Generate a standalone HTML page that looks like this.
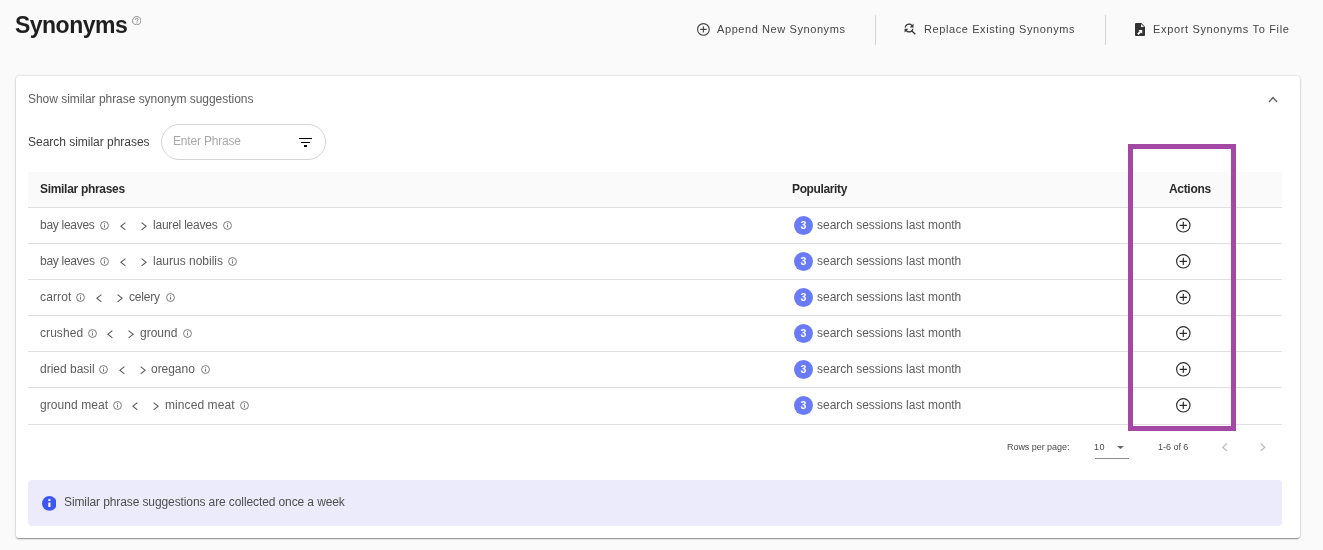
<!DOCTYPE html>
<html><head><meta charset="utf-8"><style>
html,body{margin:0;padding:0;}
body{width:1323px;height:550px;overflow:hidden;background:#fafafa;position:relative;font-family:"Liberation Sans", sans-serif;}
.t{position:absolute;white-space:nowrap;will-change:transform;}
.a{position:absolute;display:block;}
.card{position:absolute;left:16px;top:76px;width:1284px;height:462px;background:#fff;border-radius:3px;box-shadow:0px 2px 1px -1px rgba(0,0,0,0.2),0px 1px 1px 0px rgba(0,0,0,0.14),0px 1px 3px 0px rgba(0,0,0,0.12),0 0 2px rgba(0,0,0,0.2);}
.vdiv{position:absolute;top:15px;width:1px;height:29.5px;background:#d6d6d6;}
.pill{position:absolute;left:161px;top:124px;width:162.5px;height:33.5px;border:1px solid #d4d4d4;border-radius:18px;box-sizing:content-box;}
.bar{position:absolute;height:1.4px;background:#000;}
.thead{position:absolute;left:28px;top:172px;width:1254px;height:35px;background:#fafafa;}
.hline{position:absolute;left:28px;width:1254px;height:1px;background:#e0e0e0;}
.badge{position:absolute;left:794px;width:19px;height:19px;border-radius:50%;background:#6a7bf6;color:#fff;font-size:10.5px;font-weight:700;line-height:19px;text-align:center;will-change:transform;}
.alert{position:absolute;left:28px;top:480px;width:1254px;height:46px;background:#ebebfb;border-radius:4px;}
.purple{position:absolute;left:1128px;top:144px;width:98px;height:276.5px;border:5px solid #a349a4;}
</style></head><body>
<div class="card"></div>
<div class="vdiv" style="left:875px"></div><div class="vdiv" style="left:1105px"></div>
<svg class="a" style="left:131.7px;top:16px" width="9.4" height="9.4" viewBox="0 0 20 20"><circle cx="10" cy="10" r="8.9" fill="none" stroke="#7c7c7c" stroke-width="1.8"/><path d="M7 7.8 C7 6 8.4 4.9 10 4.9 C11.7 4.9 13 6 13 7.5 C13 9.5 10.3 9.6 10.3 12.2" fill="none" stroke="#7c7c7c" stroke-width="1.9"/><circle cx="10.3" cy="15" r="1.1" fill="#7c7c7c"/></svg>
<svg class="a" style="left:696.90px;top:22.90px" width="12.8" height="12.8"><circle cx="6.4" cy="6.4" r="5.825" fill="none" stroke="#4a4a4a" stroke-width="1.15"/><path d="M3.2 6.4 H9.600000000000001 M6.4 3.2 V9.600000000000001" stroke="#4a4a4a" stroke-width="1.15"/></svg>
<svg class="a" style="left:902.2px;top:21.4px" width="15.4" height="15.4" viewBox="0 0 24 24"><path fill="#383838" d="M11 6c1.38 0 2.63.56 3.54 1.46L12 10h6V4l-2.05 2.05C14.68 4.78 12.93 4 11 4c-3.53 0-6.43 2.61-6.92 6H6.1c.46-2.28 2.48-4 4.9-4zm5.64 9.14c.66-.9 1.12-1.97 1.28-3.14H15.9c-.46 2.28-2.48 4-4.9 4-1.38 0-2.63-.56-3.54-1.46L10 12H4v6l2.05-2.05C7.32 17.22 9.07 18 11 18c1.55 0 2.98-.51 4.14-1.36L20 21.49 21.49 20l-4.85-4.86z"/></svg>
<svg class="a" style="left:1134.6px;top:23px" width="10" height="13" viewBox="0 0 10 13"><path fill="#333" d="M1 0 H6.3 L10 3.7 V12 Q10 13 9 13 H1 Q0 13 0 12 V1 Q0 0 1 0 Z"/><path fill="#fff" d="M6 0.9 L9.1 4 H6 Z"/><path fill="#fff" d="M2.2 10.6 L4.6 8.2 L3.4 7 H7.2 V10.8 L6 9.6 L3.6 12 Z"/></svg>
<svg class="a" style="left:1268px;top:96px" width="10" height="7"><path d="M1 6 L5 1.6 L9 6" fill="none" stroke="#616161" stroke-width="1.4"/></svg>
<div class="pill"></div>
<div class="bar" style="left:298.7px;top:137.8px;width:13.3px"></div><div class="bar" style="left:300.9px;top:141.7px;width:9px"></div><div class="bar" style="left:303.9px;top:145.2px;width:3px;height:1.8px"></div>
<div class="thead"></div>
<div class="hline" style="top:207.0px"></div>
<div class="hline" style="top:243.0px"></div>
<div class="hline" style="top:279.0px"></div>
<div class="hline" style="top:315.0px"></div>
<div class="hline" style="top:351.0px"></div>
<div class="hline" style="top:387.0px"></div>
<div class="hline" style="top:423.5px"></div>
<svg class="a" style="left:99.90px;top:220.80px" width="9" height="9" viewBox="0 0 18 18"><circle cx="9" cy="9" r="7.9" fill="none" stroke="#666" stroke-width="1.7"/><rect x="8.1" y="7.6" width="1.8" height="5.6" fill="#666"/><rect x="8.1" y="4.6" width="1.8" height="1.8" fill="#666"/></svg>
<svg class="a" style="left:120.00px;top:222.35px" width="6" height="8.5"><path d="M5.4 0.6 L0.8 4.25 L5.4 7.9" fill="none" stroke="#5a5a5a" stroke-width="1.1"/></svg>
<svg class="a" style="left:140.80px;top:222.35px" width="6" height="8.5"><path d="M0.6 0.6 L5.2 4.25 L0.6 7.9" fill="none" stroke="#5a5a5a" stroke-width="1.1"/></svg>
<svg class="a" style="left:223.00px;top:220.80px" width="9" height="9" viewBox="0 0 18 18"><circle cx="9" cy="9" r="7.9" fill="none" stroke="#666" stroke-width="1.7"/><rect x="8.1" y="7.6" width="1.8" height="5.6" fill="#666"/><rect x="8.1" y="4.6" width="1.8" height="1.8" fill="#666"/></svg>
<div class="badge" style="top:215.80px">3</div>
<svg class="a" style="left:1176.40px;top:218.00px" width="14.6" height="14.6"><circle cx="7.3" cy="7.3" r="6.725" fill="none" stroke="#2a2a2a" stroke-width="1.15"/><path d="M3.65 7.3 H10.95 M7.3 3.65 V10.95" stroke="#2a2a2a" stroke-width="1.15"/></svg>
<svg class="a" style="left:99.80px;top:256.80px" width="9" height="9" viewBox="0 0 18 18"><circle cx="9" cy="9" r="7.9" fill="none" stroke="#666" stroke-width="1.7"/><rect x="8.1" y="7.6" width="1.8" height="5.6" fill="#666"/><rect x="8.1" y="4.6" width="1.8" height="1.8" fill="#666"/></svg>
<svg class="a" style="left:119.80px;top:258.35px" width="6" height="8.5"><path d="M5.4 0.6 L0.8 4.25 L5.4 7.9" fill="none" stroke="#5a5a5a" stroke-width="1.1"/></svg>
<svg class="a" style="left:140.60px;top:258.35px" width="6" height="8.5"><path d="M0.6 0.6 L5.2 4.25 L0.6 7.9" fill="none" stroke="#5a5a5a" stroke-width="1.1"/></svg>
<svg class="a" style="left:227.90px;top:256.80px" width="9" height="9" viewBox="0 0 18 18"><circle cx="9" cy="9" r="7.9" fill="none" stroke="#666" stroke-width="1.7"/><rect x="8.1" y="7.6" width="1.8" height="5.6" fill="#666"/><rect x="8.1" y="4.6" width="1.8" height="1.8" fill="#666"/></svg>
<div class="badge" style="top:251.80px">3</div>
<svg class="a" style="left:1176.40px;top:254.00px" width="14.6" height="14.6"><circle cx="7.3" cy="7.3" r="6.725" fill="none" stroke="#2a2a2a" stroke-width="1.15"/><path d="M3.65 7.3 H10.95 M7.3 3.65 V10.95" stroke="#2a2a2a" stroke-width="1.15"/></svg>
<svg class="a" style="left:76.20px;top:292.80px" width="9" height="9" viewBox="0 0 18 18"><circle cx="9" cy="9" r="7.9" fill="none" stroke="#666" stroke-width="1.7"/><rect x="8.1" y="7.6" width="1.8" height="5.6" fill="#666"/><rect x="8.1" y="4.6" width="1.8" height="1.8" fill="#666"/></svg>
<svg class="a" style="left:96.20px;top:294.35px" width="6" height="8.5"><path d="M5.4 0.6 L0.8 4.25 L5.4 7.9" fill="none" stroke="#5a5a5a" stroke-width="1.1"/></svg>
<svg class="a" style="left:117.30px;top:294.35px" width="6" height="8.5"><path d="M0.6 0.6 L5.2 4.25 L0.6 7.9" fill="none" stroke="#5a5a5a" stroke-width="1.1"/></svg>
<svg class="a" style="left:165.50px;top:292.80px" width="9" height="9" viewBox="0 0 18 18"><circle cx="9" cy="9" r="7.9" fill="none" stroke="#666" stroke-width="1.7"/><rect x="8.1" y="7.6" width="1.8" height="5.6" fill="#666"/><rect x="8.1" y="4.6" width="1.8" height="1.8" fill="#666"/></svg>
<div class="badge" style="top:287.80px">3</div>
<svg class="a" style="left:1176.40px;top:290.00px" width="14.6" height="14.6"><circle cx="7.3" cy="7.3" r="6.725" fill="none" stroke="#2a2a2a" stroke-width="1.15"/><path d="M3.65 7.3 H10.95 M7.3 3.65 V10.95" stroke="#2a2a2a" stroke-width="1.15"/></svg>
<svg class="a" style="left:87.80px;top:328.80px" width="9" height="9" viewBox="0 0 18 18"><circle cx="9" cy="9" r="7.9" fill="none" stroke="#666" stroke-width="1.7"/><rect x="8.1" y="7.6" width="1.8" height="5.6" fill="#666"/><rect x="8.1" y="4.6" width="1.8" height="1.8" fill="#666"/></svg>
<svg class="a" style="left:107.30px;top:330.35px" width="6" height="8.5"><path d="M5.4 0.6 L0.8 4.25 L5.4 7.9" fill="none" stroke="#5a5a5a" stroke-width="1.1"/></svg>
<svg class="a" style="left:128.20px;top:330.35px" width="6" height="8.5"><path d="M0.6 0.6 L5.2 4.25 L0.6 7.9" fill="none" stroke="#5a5a5a" stroke-width="1.1"/></svg>
<svg class="a" style="left:183.10px;top:328.80px" width="9" height="9" viewBox="0 0 18 18"><circle cx="9" cy="9" r="7.9" fill="none" stroke="#666" stroke-width="1.7"/><rect x="8.1" y="7.6" width="1.8" height="5.6" fill="#666"/><rect x="8.1" y="4.6" width="1.8" height="1.8" fill="#666"/></svg>
<div class="badge" style="top:323.80px">3</div>
<svg class="a" style="left:1176.40px;top:326.00px" width="14.6" height="14.6"><circle cx="7.3" cy="7.3" r="6.725" fill="none" stroke="#2a2a2a" stroke-width="1.15"/><path d="M3.65 7.3 H10.95 M7.3 3.65 V10.95" stroke="#2a2a2a" stroke-width="1.15"/></svg>
<svg class="a" style="left:99.10px;top:364.80px" width="9" height="9" viewBox="0 0 18 18"><circle cx="9" cy="9" r="7.9" fill="none" stroke="#666" stroke-width="1.7"/><rect x="8.1" y="7.6" width="1.8" height="5.6" fill="#666"/><rect x="8.1" y="4.6" width="1.8" height="1.8" fill="#666"/></svg>
<svg class="a" style="left:119.10px;top:366.35px" width="6" height="8.5"><path d="M5.4 0.6 L0.8 4.25 L5.4 7.9" fill="none" stroke="#5a5a5a" stroke-width="1.1"/></svg>
<svg class="a" style="left:139.60px;top:366.35px" width="6" height="8.5"><path d="M0.6 0.6 L5.2 4.25 L0.6 7.9" fill="none" stroke="#5a5a5a" stroke-width="1.1"/></svg>
<svg class="a" style="left:200.90px;top:364.80px" width="9" height="9" viewBox="0 0 18 18"><circle cx="9" cy="9" r="7.9" fill="none" stroke="#666" stroke-width="1.7"/><rect x="8.1" y="7.6" width="1.8" height="5.6" fill="#666"/><rect x="8.1" y="4.6" width="1.8" height="1.8" fill="#666"/></svg>
<div class="badge" style="top:359.80px">3</div>
<svg class="a" style="left:1176.40px;top:362.00px" width="14.6" height="14.6"><circle cx="7.3" cy="7.3" r="6.725" fill="none" stroke="#2a2a2a" stroke-width="1.15"/><path d="M3.65 7.3 H10.95 M7.3 3.65 V10.95" stroke="#2a2a2a" stroke-width="1.15"/></svg>
<svg class="a" style="left:112.70px;top:400.80px" width="9" height="9" viewBox="0 0 18 18"><circle cx="9" cy="9" r="7.9" fill="none" stroke="#666" stroke-width="1.7"/><rect x="8.1" y="7.6" width="1.8" height="5.6" fill="#666"/><rect x="8.1" y="4.6" width="1.8" height="1.8" fill="#666"/></svg>
<svg class="a" style="left:132.40px;top:402.35px" width="6" height="8.5"><path d="M5.4 0.6 L0.8 4.25 L5.4 7.9" fill="none" stroke="#5a5a5a" stroke-width="1.1"/></svg>
<svg class="a" style="left:153.30px;top:402.35px" width="6" height="8.5"><path d="M0.6 0.6 L5.2 4.25 L0.6 7.9" fill="none" stroke="#5a5a5a" stroke-width="1.1"/></svg>
<svg class="a" style="left:240.00px;top:400.80px" width="9" height="9" viewBox="0 0 18 18"><circle cx="9" cy="9" r="7.9" fill="none" stroke="#666" stroke-width="1.7"/><rect x="8.1" y="7.6" width="1.8" height="5.6" fill="#666"/><rect x="8.1" y="4.6" width="1.8" height="1.8" fill="#666"/></svg>
<div class="badge" style="top:395.80px">3</div>
<svg class="a" style="left:1176.40px;top:398.00px" width="14.6" height="14.6"><circle cx="7.3" cy="7.3" r="6.725" fill="none" stroke="#2a2a2a" stroke-width="1.15"/><path d="M3.65 7.3 H10.95 M7.3 3.65 V10.95" stroke="#2a2a2a" stroke-width="1.15"/></svg>
<svg class="a" style="left:1116.5px;top:445.8px" width="7" height="3"><path d="M0 0 H7 L3.5 3 Z" fill="#666"/></svg>
<div style="position:absolute;left:1095px;top:457.7px;width:34px;height:1px;background:#8c8c8c"></div>
<svg class="a" style="left:1222.40px;top:442.90px" width="5.6" height="8.6"><path d="M5.0 0.6 L0.8 4.3 L5.0 8.0" fill="none" stroke="#bdbdbd" stroke-width="1.3"/></svg>
<svg class="a" style="left:1260.00px;top:442.90px" width="5.6" height="8.6"><path d="M0.6 0.6 L4.8 4.3 L0.6 8.0" fill="none" stroke="#bdbdbd" stroke-width="1.3"/></svg>
<div class="alert"></div>
<svg class="a" style="left:41.5px;top:495.8px" width="14.8" height="14.8" viewBox="0 0 20 20"><circle cx="10" cy="10" r="10" fill="#3d55f1"/><rect x="8.55" y="8.8" width="2.9" height="6.1" fill="#fff"/><rect x="8.55" y="4.3" width="2.9" height="2.4" fill="#fff"/></svg>
<div class="purple"></div>
<span id="title" class="t" style="left:14.58px;top:13.73px;font-size:23px;line-height:23px;font-weight:700;color:#1f1f1f;letter-spacing:-0.521px">Synonyms</span>
<span id="b1" class="t" style="left:716.88px;top:24.19px;font-size:11px;line-height:11px;font-weight:400;color:#454545;letter-spacing:0.587px">Append New Synonyms</span>
<span id="b2" class="t" style="left:923.76px;top:24.19px;font-size:11px;line-height:11px;font-weight:400;color:#454545;letter-spacing:0.594px">Replace Existing Synonyms</span>
<span id="b3" class="t" style="left:1152.76px;top:24.19px;font-size:11px;line-height:11px;font-weight:400;color:#454545;letter-spacing:0.654px">Export Synonyms To File</span>
<span id="show" class="t" style="left:27.90px;top:92.64px;font-size:12px;line-height:12px;font-weight:400;color:#5f5f5f;letter-spacing:-0.036px">Show similar phrase synonym suggestions</span>
<span id="search" class="t" style="left:28.30px;top:135.54px;font-size:12px;line-height:12px;font-weight:400;color:#3f3f3f;letter-spacing:-0.023px">Search similar phrases</span>
<span id="enter" class="t" style="left:172.60px;top:134.94px;font-size:12px;line-height:12px;font-weight:400;color:#a8a8a8;letter-spacing:-0.182px">Enter Phrase</span>
<span id="h1" class="t" style="left:40.20px;top:182.54px;font-size:12px;line-height:12px;font-weight:700;color:#2b2b2b;letter-spacing:-0.309px">Similar phrases</span>
<span id="h2" class="t" style="left:792.45px;top:183.44px;font-size:12px;line-height:12px;font-weight:700;color:#2b2b2b;letter-spacing:-0.375px">Popularity</span>
<span id="h3" class="t" style="left:1168.55px;top:183.44px;font-size:12px;line-height:12px;font-weight:700;color:#2b2b2b;letter-spacing:-0.322px">Actions</span>
<span id="rpp" class="t" style="left:1007.19px;top:442.88px;font-size:9px;line-height:9px;font-weight:400;color:#4a4a4a;letter-spacing:-0.047px">Rows per page:</span>
<span id="ten" class="t" style="left:1094.03px;top:442.88px;font-size:9px;line-height:9px;font-weight:400;color:#4a4a4a;letter-spacing:0.526px">10</span>
<span id="of" class="t" style="left:1158.03px;top:442.88px;font-size:9px;line-height:9px;font-weight:400;color:#4a4a4a;letter-spacing:-0.026px">1-6 of 6</span>
<span id="alert" class="t" style="left:63.80px;top:495.64px;font-size:12px;line-height:12px;font-weight:400;color:#4f4f4f;letter-spacing:-0.104px">Similar phrase suggestions are collected once a week</span>
<span id="r0a" class="t" style="left:39.73px;top:218.84px;font-size:12px;line-height:12px;font-weight:400;color:#5c5c5c;letter-spacing:-0.290px">bay leaves</span>
<span id="r0b" class="t" style="left:152.61px;top:218.84px;font-size:12px;line-height:12px;font-weight:400;color:#5c5c5c;letter-spacing:-0.217px">laurel leaves</span>
<span id="r0p" class="t" style="left:816.91px;top:218.84px;font-size:12px;line-height:12px;font-weight:400;color:#5c5c5c;letter-spacing:-0.018px">search sessions last month</span>
<span id="r1a" class="t" style="left:39.73px;top:254.84px;font-size:12px;line-height:12px;font-weight:400;color:#5c5c5c;letter-spacing:-0.277px">bay leaves</span>
<span id="r1b" class="t" style="left:152.71px;top:254.84px;font-size:12px;line-height:12px;font-weight:400;color:#5c5c5c;letter-spacing:-0.005px">laurus nobilis</span>
<span id="r1p" class="t" style="left:816.91px;top:254.84px;font-size:12px;line-height:12px;font-weight:400;color:#5c5c5c;letter-spacing:-0.018px">search sessions last month</span>
<span id="r2a" class="t" style="left:40.18px;top:290.84px;font-size:12px;line-height:12px;font-weight:400;color:#5c5c5c;letter-spacing:0.146px">carrot</span>
<span id="r2b" class="t" style="left:129.38px;top:290.84px;font-size:12px;line-height:12px;font-weight:400;color:#5c5c5c;letter-spacing:-0.211px">celery</span>
<span id="r2p" class="t" style="left:816.91px;top:290.84px;font-size:12px;line-height:12px;font-weight:400;color:#5c5c5c;letter-spacing:-0.018px">search sessions last month</span>
<span id="r3a" class="t" style="left:40.18px;top:326.84px;font-size:12px;line-height:12px;font-weight:400;color:#5c5c5c;letter-spacing:0.068px">crushed</span>
<span id="r3b" class="t" style="left:140.27px;top:326.84px;font-size:12px;line-height:12px;font-weight:400;color:#5c5c5c;letter-spacing:-0.009px">ground</span>
<span id="r3p" class="t" style="left:816.91px;top:326.84px;font-size:12px;line-height:12px;font-weight:400;color:#5c5c5c;letter-spacing:-0.018px">search sessions last month</span>
<span id="r4a" class="t" style="left:40.27px;top:362.84px;font-size:12px;line-height:12px;font-weight:400;color:#5c5c5c;letter-spacing:-0.004px">dried basil</span>
<span id="r4b" class="t" style="left:151.34px;top:362.84px;font-size:12px;line-height:12px;font-weight:400;color:#5c5c5c;letter-spacing:-0.039px">oregano</span>
<span id="r4p" class="t" style="left:816.91px;top:362.84px;font-size:12px;line-height:12px;font-weight:400;color:#5c5c5c;letter-spacing:-0.018px">search sessions last month</span>
<span id="r5a" class="t" style="left:40.27px;top:398.84px;font-size:12px;line-height:12px;font-weight:400;color:#5c5c5c;letter-spacing:0.065px">ground meat</span>
<span id="r5b" class="t" style="left:164.58px;top:398.84px;font-size:12px;line-height:12px;font-weight:400;color:#5c5c5c;letter-spacing:0.080px">minced meat</span>
<span id="r5p" class="t" style="left:816.91px;top:398.84px;font-size:12px;line-height:12px;font-weight:400;color:#5c5c5c;letter-spacing:-0.018px">search sessions last month</span>
</body></html>
